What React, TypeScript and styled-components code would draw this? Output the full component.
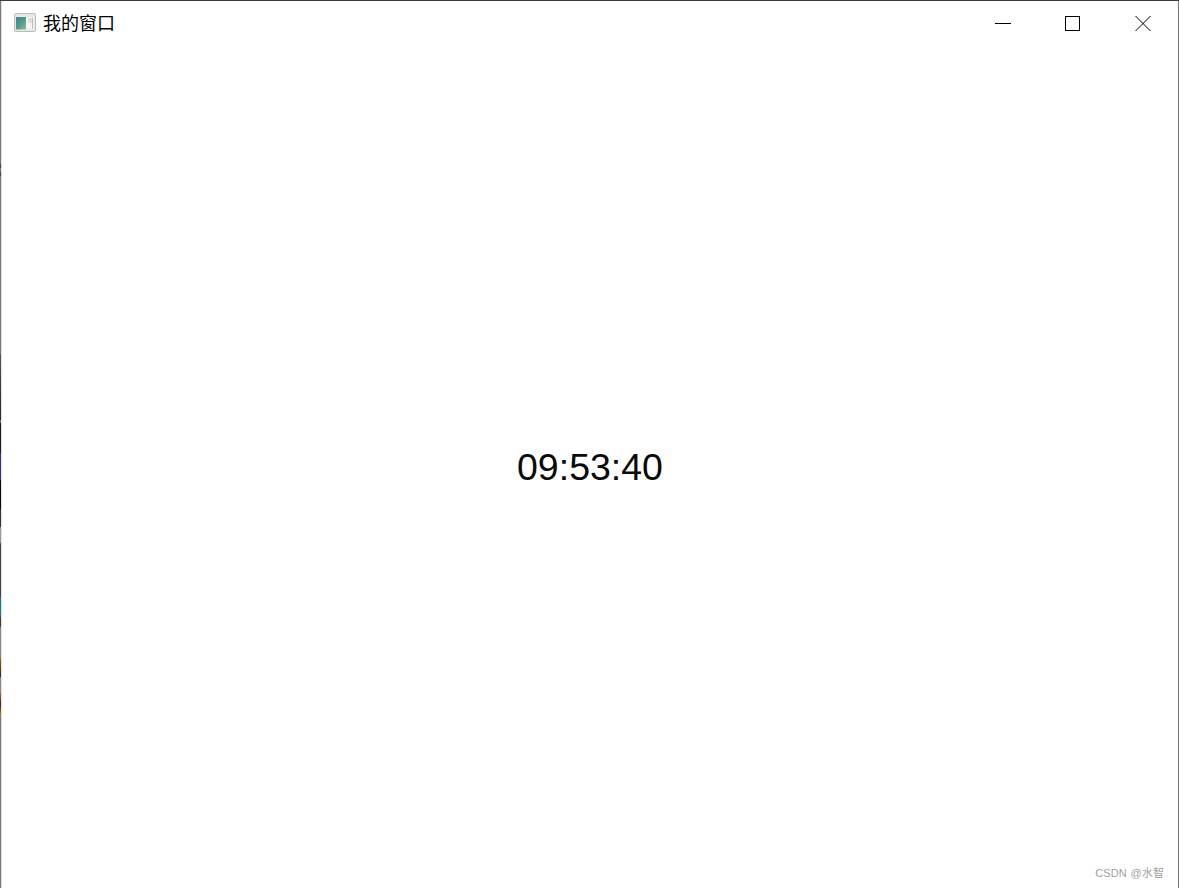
import { FC } from 'react';
import styled, { createGlobalStyle } from 'styled-components';

const GlobalStyle = createGlobalStyle`
  html, body {
    margin: 0;
    padding: 0;
    background: #fff;
  }
`;

const WindowIcon: FC = () => (
  <svg width="22" height="19" viewBox="0 0 22 19">
    <defs>
      <linearGradient id="paneFill" x1="0" y1="0" x2="1" y2="1">
        <stop offset="0" stopColor="#4d7f96" />
        <stop offset="0.5" stopColor="#4f9a8c" />
        <stop offset="1" stopColor="#8fbf8a" />
      </linearGradient>
    </defs>
    <rect x="0.5" y="0.5" width="21" height="18" rx="1.5" fill="#e4e6e8" stroke="#b9bdc2" />
    <rect x="2" y="4" width="18" height="12.5" fill="#f4f5f5" />
    <rect x="2" y="4" width="10" height="12.5" fill="url(#paneFill)" />
    <rect x="14" y="5" width="4" height="5" fill="#dcdfdc" />
    <rect x="18" y="5" width="1" height="11" fill="#b4c2ba" />
  </svg>
);

const MinimizeIcon: FC = () => (
  <svg width="16" height="16" viewBox="0 0 16 16" shapeRendering="crispEdges">
    <path d="M0 7.5H16" stroke="#000" fill="none" />
  </svg>
);

const MaximizeIcon: FC = () => (
  <svg width="16" height="16" viewBox="0 0 16 16" shapeRendering="crispEdges">
    <rect x="0.5" y="0.5" width="14" height="14" stroke="#000" fill="none" />
  </svg>
);

const CloseIcon: FC = () => (
  <svg width="16" height="16" viewBox="0 0 16 16">
    <path d="M0.5 0L15.5 15M15.5 0L0.5 15" stroke="#000" strokeWidth="1" fill="none" />
  </svg>
);

export default function App() {
  return (
    <>
      <GlobalStyle />
      <Frame>
        <Window>
          <TitleBar>
            <TitleGroup>
              <WindowIcon />
              <Title>我的窗口</Title>
            </TitleGroup>
            <Controls>
              <ControlButton type="button" aria-label="最小化">
                <MinimizeIcon />
              </ControlButton>
              <ControlButton type="button" aria-label="最大化">
                <MaximizeIcon />
              </ControlButton>
              <ControlButton type="button" aria-label="关闭">
                <CloseIcon />
              </ControlButton>
            </Controls>
          </TitleBar>
          <Content>
            <Clock>09:53:40</Clock>
          </Content>
          <Watermark>CSDN @水智</Watermark>
        </Window>
      </Frame>
    </>
  );
}

// the desktop shows through the 1px edge on the left, so it is painted as a strip
const Frame = styled.div`
  width: 1179px;
  height: 888px;
  box-sizing: border-box;
  padding: 1px 1px 0 1px;
  overflow: hidden;
  background:
    linear-gradient(#3c3c3c, #3c3c3c) top / 100% 1px no-repeat,
    linear-gradient(#777, #777) right / 1px 100% no-repeat,
    linear-gradient(
        to bottom,
        #777 0,
        #777 164px,
        #444 164px,
        #444 168px,
        #777 168px,
        #777 172px,
        #444 172px,
        #444 176px,
        #777 176px,
        #777 354px,
        #555 354px,
        #333 400px,
        #2a2a2a 420px,
        #999 421px,
        #111827 424px,
        #111827 452px,
        #4a2c8f 454px,
        #4a2c8f 479px,
        #0a0a0a 481px,
        #0a0a0a 508px,
        #333 510px,
        #333 526px,
        #999 528px,
        #999 542px,
        #444 544px,
        #444 596px,
        #12808c 598px,
        #12808c 616px,
        #4a3a30 618px,
        #4a3a30 626px,
        #888 628px,
        #888 657px,
        #a8661c 658px,
        #33261c 676px,
        #888 678px,
        #888 692px,
        #a8661c 694px,
        #33261c 704px,
        #c47a1c 716px,
        #777 718px,
        #777 100%
      )
      left / 1px 100% no-repeat;
`;

const Window = styled.div`
  position: relative;
  display: flex;
  flex-direction: column;
  height: 100%;
  background: #fff;
  border-left: 1px solid #e2e2e2;
  box-sizing: border-box;
`;

const TitleBar = styled.div`
  display: flex;
  align-items: center;
  justify-content: space-between;
  flex: none;
  height: 45px;
  padding-left: 12px;
`;

const TitleGroup = styled.div`
  display: flex;
  align-items: center;
  gap: 7px;
  margin-bottom: 2px;
`;

const Title = styled.span`
  font-family: 'Noto Sans CJK SC', 'Liberation Sans', sans-serif;
  font-size: 18px;
  line-height: 24px;
  color: #000;
  margin-bottom: 1px;
`;

const Controls = styled.div`
  display: flex;
  align-items: center;
  height: 100%;
`;

const ControlButton = styled.button`
  display: flex;
  align-items: center;
  justify-content: center;
  width: 70px;
  height: 100%;
  padding: 0;
  border: none;
  background: transparent;
`;

const Content = styled.main`
  display: flex;
  flex: 1;
  align-items: center;
  justify-content: center;
`;

const Clock = styled.div`
  font-family: 'Liberation Sans', Arial, sans-serif;
  font-size: 37.5px;
  line-height: 44px;
  color: #0a0a0a;
`;

const Watermark = styled.span`
  position: absolute;
  right: 14px;
  bottom: 8px;
  font-family: 'Liberation Sans', 'Noto Sans CJK SC', sans-serif;
  font-size: 11px;
  line-height: 14px;
  word-spacing: 0.5px;
  letter-spacing: 0.1px;
  color: #a0a0a0;
`;
